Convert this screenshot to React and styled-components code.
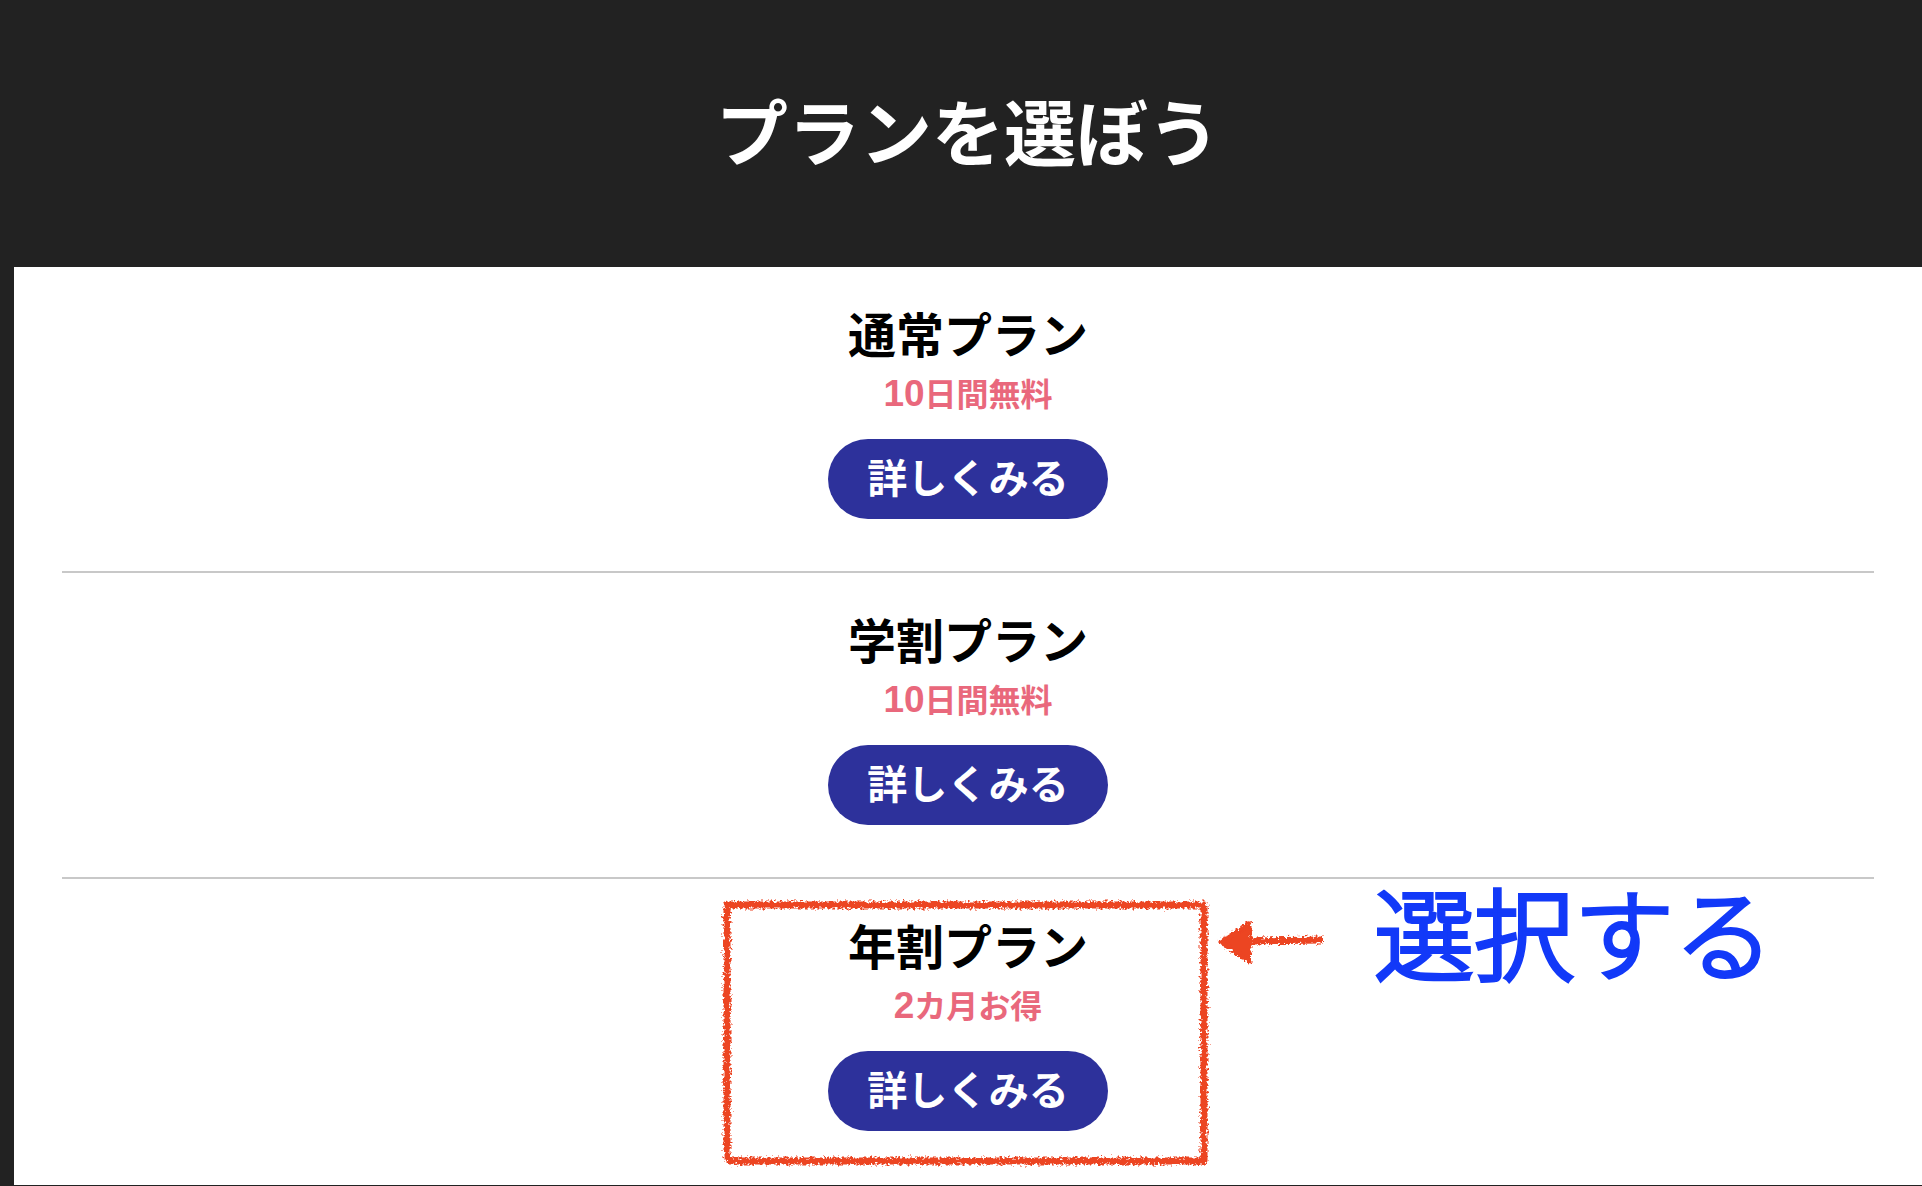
import React from "react";
import styled, { createGlobalStyle } from "styled-components";

const GlobalStyle = createGlobalStyle`
  *, *::before, *::after { box-sizing: border-box; }
  body {
    margin: 0;
    background: #222222;
    font-family: "Noto Sans CJK JP", sans-serif;
    font-weight: 700;
  }
`;

const Page = styled.main`
  display: flex;
  flex-direction: column;
  min-height: 100vh;
  padding: 0 0 1px 14px;
  overflow: hidden;
`;

const Header = styled.header`
  padding: 75px 16px 84px;
  text-align: center;
`;

const Title = styled.h1`
  margin: 0;
  color: #ffffff;
  font-size: 72px;
  line-height: 108px;
`;

const PlanList = styled.ul`
  flex: 1;
  margin: 0;
  padding: 0 48px;
  list-style: none;
  background: #ffffff;
`;

const PlanItem = styled.li`
  position: relative;
  display: flex;
  flex-direction: column;
  align-items: center;
  padding: 33px 0 52px;

  & + & {
    border-top: 2px solid #c8c8c8;
  }
`;

const PlanName = styled.h2`
  margin: 0 0 4px;
  color: #000000;
  font-size: 48px;
  line-height: 64px;
`;

const PlanNote = styled.p`
  margin: 0 0 23px;
  color: #e9687c;
  font-size: 32px;
  line-height: 48px;
`;

const Digits = styled.span`
  font-family: "Liberation Sans", sans-serif;
  font-size: 37px;
  line-height: 1;
`;

const DetailButton = styled.button`
  width: 280px;
  height: 80px;
  padding: 0 0 5px;
  border: 0;
  border-radius: 40px;
  background: #2d319b;
  color: #ffffff;
  font: inherit;
  font-size: 40px;
  line-height: 75px;
  cursor: pointer;
`;

const Annotation = styled.div`
  position: absolute;
  top: 0;
  left: calc(50% - 250px);
  display: flex;
  align-items: flex-start;
  gap: 48px;
  pointer-events: none;
`;

const Crayon = styled.svg`
  flex: none;
  display: block;
`;

const AnnotationText = styled.span`
  color: #1239f8;
  font-size: 100px;
  font-weight: 300;
  line-height: 102px;
  white-space: nowrap;
  -webkit-text-stroke: 4px #1239f8;
`;

function CrayonMarks() {
  return (
    <Crayon width="608" height="300" viewBox="0 0 608 300" aria-hidden="true">
      <defs>
        <filter id="crayon" filterUnits="userSpaceOnUse" x="0" y="0" width="608" height="300">
          <feTurbulence type="fractalNoise" baseFrequency="0.4" numOctaves="3" seed="4" result="noise" />
          <feDisplacementMap in="SourceGraphic" in2="noise" scale="8" xChannelSelector="R" yChannelSelector="G" />
        </filter>
      </defs>
      <g filter="url(#crayon)" fill="none" stroke="#ec4424" strokeWidth="7" strokeLinejoin="round">
        <path d="M9 26 L486 26 L486 282 L13 282 L9 278 Z" />
        <path d="M530 62 L605 61" />
        <path d="M503 63 L531 45 L531 82 Z" fill="#ec4424" strokeWidth="5" />
      </g>
    </Crayon>
  );
}

const plans = [
  { name: "通常プラン", count: "10", note: "日間無料" },
  { name: "学割プラン", count: "10", note: "日間無料" },
  { name: "年割プラン", count: "2", note: "カ月お得", marked: true },
];

export default function App() {
  return (
    <>
      <GlobalStyle />
      <Page>
        <Header>
          <Title>プランを選ぼう</Title>
        </Header>
        <PlanList>
          {plans.map((plan) => (
            <PlanItem key={plan.name}>
              <PlanName>{plan.name}</PlanName>
              <PlanNote>
                <Digits>{plan.count}</Digits>
                {plan.note}
              </PlanNote>
              <DetailButton type="button">詳しくみる</DetailButton>
              {plan.marked && (
                <Annotation>
                  <CrayonMarks />
                  <AnnotationText>選択する</AnnotationText>
                </Annotation>
              )}
            </PlanItem>
          ))}
        </PlanList>
      </Page>
    </>
  );
}
